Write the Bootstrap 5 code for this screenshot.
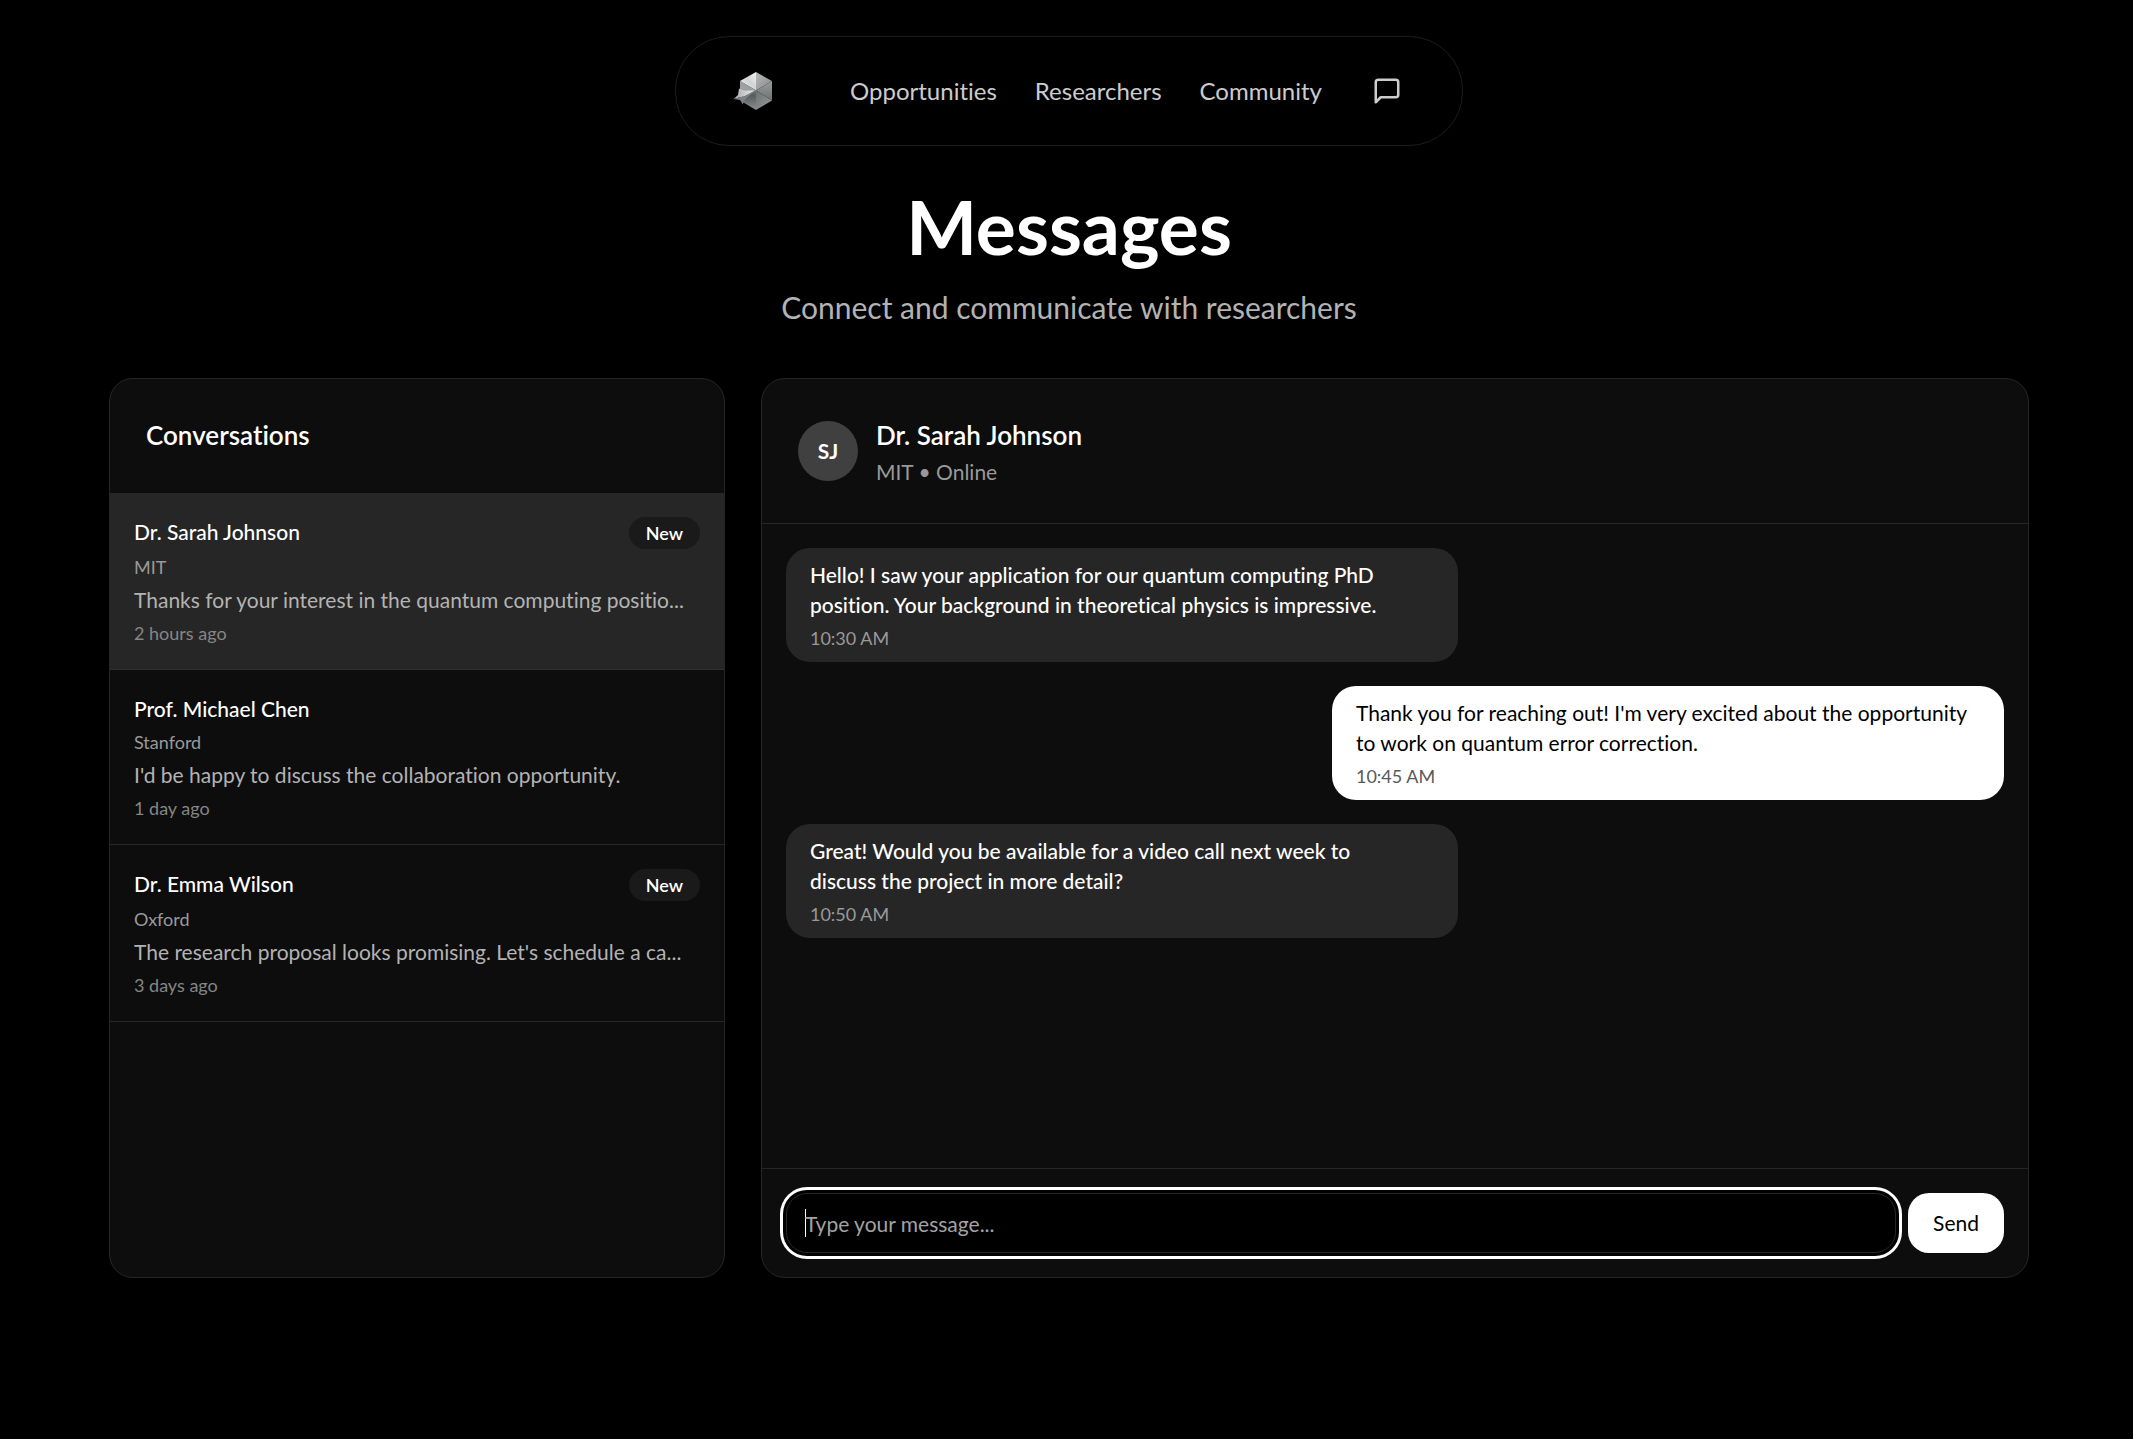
<!DOCTYPE html>
<html lang="en" data-bs-theme="dark">
<head>
<meta charset="utf-8">
<meta name="viewport" content="width=device-width, initial-scale=1">
<title>Messages</title>
<link href="https://cdn.jsdelivr.net/npm/bootstrap@5.3.0/dist/css/bootstrap.min.css" rel="stylesheet">
<style>
  :root {
    --line: #262626;
    --panel: #0d0d0d;
    --raised: #262626;
  }
  body {
    background: #000;
    color: #fff;
    font-family: Lato, "Open Sans", sans-serif;
    font-size: 21px;
    line-height: 30px;
    font-variant-ligatures: none;
  }
  .page { padding: 36px 18px 36px 23px; }
  .shell { max-width: 1920px; }

  .pill-nav {
    height: 110px;
    padding: 0 60px 0 56px;
    border: 1px solid #1c1c1c;
    border-radius: 54px;
  }
  .pill-links { gap: 38px; margin: 0 50px 0 76px; }
  .pill-links a, .icon-btn { color: #ccc; font-size: 24px; text-decoration: none; }
  .icon-btn { display: flex; }

  .page-title { font-size: 75px; line-height: 72px; font-weight: 700; margin: 44px 0 24px; }
  .page-sub { font-size: 30px; line-height: 42px; color: #b3b3b3; margin-bottom: 50px; }

  .panels { --bs-gutter-x: 36px; --bs-gutter-y: 36px; }
  .panel {
    min-height: 900px;
    background: var(--panel);
    border: 1px solid var(--line);
    border-radius: 24px;
    overflow: hidden;
  }
  .panel-head { padding: 36px; }
  .panel-title { font-size: 26px; line-height: 40px; font-weight: 600; margin: 0 0 2px; }

  .convo {
    color: #fff;
    text-decoration: none;
    padding: 24px;
    border-bottom: 1px solid var(--line);
  }
  .convo.current { background: var(--raised); border-bottom-color: #303030; }
  .convo-top { margin-bottom: 6px; }
  .convo-name { font-weight: 500; }
  .convo-org, .convo-when, .stamp { font-size: 18px; line-height: 24px; }
  .convo-org { color: #999; margin-bottom: 6px; }
  .convo-text { color: #b3b3b3; margin-bottom: 6px; }
  .convo-when { color: #858585; }
  .tag-new {
    background: #1a1a1a;
    color: #fff;
    font-size: 18px;
    line-height: 24px;
    font-weight: 600;
    padding: 4px 17px;
    border-radius: 16px;
  }

  .chat-head { gap: 18px; border-bottom: 1px solid var(--line); }
  .avatar { width: 60px; height: 60px; background: #404040; font-weight: 700; }
  .presence { color: #999; }

  .thread { gap: 24px; padding: 24px; }
  .bubble {
    width: 672px;
    max-width: 100%;
    padding: 12px 24px;
    border-radius: 24px;
    background: var(--raised);
    font-weight: 500;
  }
  .bubble p { margin-bottom: 6px; }
  .bubble.mine { background: #fff; color: #000; font-weight: 400; }
  .stamp { color: #999; font-weight: 400; }
  .mine .stamp { color: #595959; }

  .composer { gap: 12px; padding: 24px; border-top: 1px solid var(--line); }
  .composer-input, .composer-input:focus {
    height: 60px;
    padding: 0 18px;
    background: #000;
    color: #fff;
    font-size: 21px;
    border: 1px solid var(--line);
    border-radius: 21px;
    caret-color: #fff;
  }
  .composer-input:focus { box-shadow: 0 0 0 3px #000, 0 0 0 6px #fff; }
  .composer-input:focus:placeholder-shown {
    background: linear-gradient(#fff, #fff) 18px center / 1px 28px no-repeat #000;
  }
  .composer-input::placeholder { color: #a3a3a3; opacity: 1; }
  .send-btn, .send-btn:hover {
    height: 60px;
    padding: 0 25px;
    background: #fff;
    color: #000;
    font-size: 21px;
    border: 0;
    border-radius: 21px;
  }
</style>
</head>
<body>
<div class="page">
  <header class="d-flex justify-content-center">
    <nav class="pill-nav d-flex align-items-center" aria-label="Main">
      <a href="#" class="d-flex" aria-label="Home">
        <svg width="42" height="42" viewBox="0 0 42 42" aria-hidden="true">
          <defs>
            <linearGradient id="g1" x1="0" y1="1" x2="1" y2="0"><stop offset="0" stop-color="#f4f4f4"/><stop offset=".55" stop-color="#d2d4d4"/><stop offset="1" stop-color="#f2f2f2"/></linearGradient>
            <linearGradient id="g2" x1="0" y1="0" x2="1" y2="1"><stop offset="0" stop-color="#b8baba"/><stop offset="1" stop-color="#85898a"/></linearGradient>
            <linearGradient id="g3" x1="0" y1="0" x2="0" y2="1"><stop offset="0" stop-color="#9a9e9f"/><stop offset="1" stop-color="#6c7071"/></linearGradient>
            <linearGradient id="g4" x1="0" y1="0" x2="1" y2="1"><stop offset="0" stop-color="#6c7172"/><stop offset="1" stop-color="#979b9c"/></linearGradient>
            <linearGradient id="g5" x1="0" y1="0" x2="0" y2="1"><stop offset="0" stop-color="#a9adae"/><stop offset=".5" stop-color="#565b5c"/><stop offset="1" stop-color="#8c9091"/></linearGradient>
            <linearGradient id="g6" x1="0" y1="0" x2="1" y2="0"><stop offset="0" stop-color="#a2a6a7"/><stop offset="1" stop-color="#f0f1f1"/></linearGradient>
          </defs>
          <path d="M24 2 8 11 24 20.500z" fill="url(#g1)"/>
          <path d="M24 2 40 11 24 20.500z" fill="url(#g2)"/>
          <path d="M40 11V30.500L24 20.500z" fill="url(#g3)"/>
          <path d="M24 20.500 40 30.500 24 40z" fill="url(#g4)"/>
          <path d="M24 20.500 8 11V30.500L24 40z" fill="url(#g5)"/>
          <path d="M8 11 24 20.500 8 21z" fill="#9da0a1"/>
          <path d="M1.500 29 6 25 7 18.500 12 20.500 23 20.500 13 26z" fill="url(#g6)"/>
          <path d="M1.500 29 13 26 23 20.500 13 29.500 10.500 34.500 8.500 30z" fill="#7c8182"/>
        </svg>
      </a>
      <div class="pill-links d-flex">
        <a href="#">Opportunities</a>
        <a href="#">Researchers</a>
        <a href="#">Community</a>
      </div>
      <a href="#" class="icon-btn" aria-label="Messages">
        <svg width="30" height="30" viewBox="0 0 24 24" fill="none" stroke="currentColor" stroke-width="2" stroke-linecap="round" stroke-linejoin="round" aria-hidden="true"><path d="M21 15a2 2 0 0 1-2 2H7l-4 4V5a2 2 0 0 1 2-2h14a2 2 0 0 1 2 2z"/></svg>
      </a>
    </nav>
  </header>

  <main class="shell mx-auto">
    <div class="text-center">
      <h1 class="page-title">Messages</h1>
      <p class="page-sub">Connect and communicate with researchers</p>
    </div>

    <div class="row panels">
      <section class="col-12 col-lg-4">
        <div class="panel h-100">
          <div class="panel-head"><h2 class="panel-title">Conversations</h2></div>
          <a href="#" class="convo current d-block">
            <div class="convo-top d-flex justify-content-between align-items-start">
              <span class="convo-name">Dr. Sarah Johnson</span><span class="tag-new">New</span>
            </div>
            <div class="convo-org">MIT</div>
            <div class="convo-text text-truncate">Thanks for your interest in the quantum computing positio...</div>
            <div class="convo-when">2 hours ago</div>
          </a>
          <a href="#" class="convo d-block">
            <div class="convo-top d-flex justify-content-between align-items-start">
              <span class="convo-name">Prof. Michael Chen</span>
            </div>
            <div class="convo-org">Stanford</div>
            <div class="convo-text text-truncate">I'd be happy to discuss the collaboration opportunity.</div>
            <div class="convo-when">1 day ago</div>
          </a>
          <a href="#" class="convo d-block">
            <div class="convo-top d-flex justify-content-between align-items-start">
              <span class="convo-name">Dr. Emma Wilson</span><span class="tag-new">New</span>
            </div>
            <div class="convo-org">Oxford</div>
            <div class="convo-text text-truncate">The research proposal looks promising. Let's schedule a ca...</div>
            <div class="convo-when">3 days ago</div>
          </a>
        </div>
      </section>

      <section class="col-12 col-lg-8">
        <div class="panel h-100 d-flex flex-column">
          <div class="panel-head chat-head d-flex align-items-center">
            <div class="avatar rounded-circle d-flex align-items-center justify-content-center">SJ</div>
            <div>
              <h2 class="panel-title">Dr. Sarah Johnson</h2>
              <div class="presence">MIT • Online</div>
            </div>
          </div>
          <div class="thread d-flex flex-column flex-grow-1">
            <div class="bubble">
              <p>Hello! I saw your application for our quantum computing PhD position. Your background in theoretical physics is impressive.</p>
              <div class="stamp">10:30 AM</div>
            </div>
            <div class="bubble mine align-self-end">
              <p>Thank you for reaching out! I'm very excited about the opportunity to work on quantum error correction.</p>
              <div class="stamp">10:45 AM</div>
            </div>
            <div class="bubble">
              <p>Great! Would you be available for a video call next week to<br>discuss the project in more detail?</p>
              <div class="stamp">10:50 AM</div>
            </div>
          </div>
          <form class="composer d-flex">
            <input type="text" class="composer-input form-control" placeholder="Type your message..." aria-label="Message" autofocus>
            <button type="button" class="send-btn btn flex-shrink-0">Send</button>
          </form>
        </div>
      </section>
    </div>
  </main>
</div>
<script src="https://cdn.jsdelivr.net/npm/bootstrap@5.3.0/dist/js/bootstrap.bundle.min.js"></script>
</body>
</html>
